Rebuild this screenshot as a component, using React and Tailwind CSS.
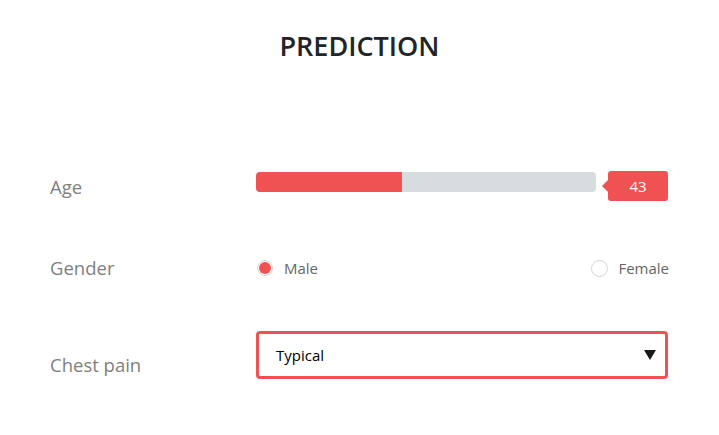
export default function App() {
  return (
    <div className="w-[719px] h-[435px] bg-white font-['Open_Sans',sans-serif]">
      <h1 className="pt-[28px] text-center text-[27px] leading-[36px] font-semibold text-[#212529]">
        PREDICTION
      </h1>

      {/* Age */}
      <div className="mt-[106px] flex pl-[50px]">
        <div className="w-[206px] pt-[5px] text-[18.5px] leading-[24px] text-[#7f7f7f]">Age</div>
        <div className="flex items-start w-[412px]">
          <div className="mt-[2px] flex h-[20px] w-[340px] overflow-hidden rounded-[4px] bg-[#d7dcdf]">
            <div className="h-full w-[146px] bg-[#f05254]" />
          </div>
          <div className="relative ml-[12px] mt-[1px] flex h-[30px] w-[60px] items-center justify-center rounded-[3px] bg-[#f05254] text-[15px] text-white">
            <span className="absolute left-[-6px] top-[9px] h-0 w-0 border-y-[6px] border-r-[6px] border-y-transparent border-r-[#f05254]" />
            43
          </div>
        </div>
      </div>

      {/* Gender */}
      <div className="mt-[55px] flex items-center pl-[50px]">
        <div className="w-[206px] text-[18.5px] leading-[24px] text-[#7f7f7f]">Gender</div>
        <div className="flex w-[413px] items-center justify-between">
          <label className="flex items-center">
            <span className="ml-[1px] flex h-[16px] w-[16px] items-center justify-center rounded-full border border-[#d5d5d5] bg-white">
              <span className="h-[12px] w-[12px] rounded-full bg-[#f05254]" />
            </span>
            <span className="ml-[11px] text-[15px] text-[#666]">Male</span>
          </label>
          <label className="flex items-center">
            <span className="h-[17px] w-[17px] rounded-full border border-[#d5d5d5] bg-white" />
            <span className="ml-[10px] text-[15px] text-[#666]">Female</span>
          </label>
        </div>
      </div>

      {/* Chest pain */}
      <div className="mt-[51px] flex items-end pl-[50px]">
        <div className="w-[206px] pb-[2px] text-[18.5px] leading-[24px] text-[#7f7f7f]">Chest pain</div>
        <div className="flex h-[48px] w-[412px] items-center justify-between rounded-[4px] border-[3px] border-[#f05254] pl-[17px] pr-[9px]">
          <span className="text-[15px] text-black">Typical</span>
          <svg width="12" height="10" viewBox="0 0 12 10">
            <path d="M0 0 L12 0 L6 10 Z" fill="#1a1a1a" />
          </svg>
        </div>
      </div>
    </div>
  );
}
